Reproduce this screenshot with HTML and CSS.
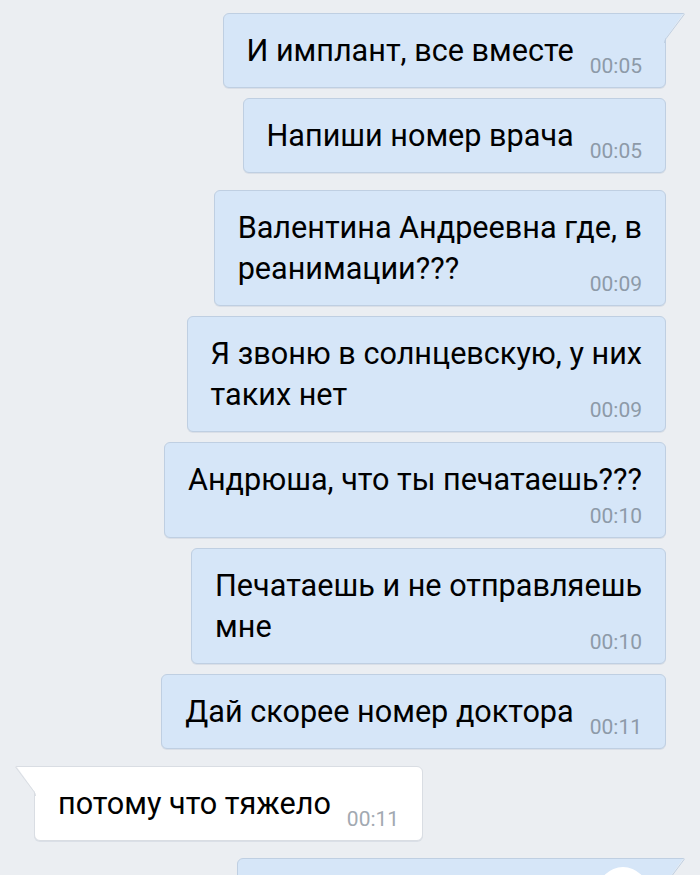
FILE: index.html
```html
<!DOCTYPE html>
<html lang="ru">

<head>
    <meta charset="UTF-8">
    <meta name="viewport" content="width=device-width, initial-scale=1.0">
    <title>Сообщения</title>
    <link rel="stylesheet" href="styles.css">
</head>

<body>
    <div class="chat">
        <div class="msg out row tail">
            <span class="text">И имплант, все вместе</span>
            <span class="time">00:05</span>
            <svg class="tail-svg" width="22" height="30" viewBox="0 0 22 30">
                <path class="tail-fill" d="M0 1 H19 L1.2 26 L0 28 Z"></path>
                <path class="tail-line" d="M0 0.5 H19.6 Q20.6 0.6 20 1.6 L2.2 25.4 Q0.5 27.6 0.5 30"></path>
            </svg>
        </div>
        <div class="msg out row">
            <span class="text">Напиши номер врача</span>
            <span class="time">00:05</span>
        </div>
        <div class="msg out stack group">
            <span class="text">Валентина Андреевна где, в<br>реанимации???</span>
            <span class="time">00:09</span>
        </div>
        <div class="msg out stack">
            <span class="text">Я звоню в солнцевскую, у них<br>таких нет</span>
            <span class="time">00:09</span>
        </div>
        <div class="msg out under">
            <span class="text">Андрюша, что ты печатаешь???</span>
            <span class="time">00:10</span>
        </div>
        <div class="msg out stack">
            <span class="text">Печатаешь и не отправляешь<br>мне</span>
            <span class="time">00:10</span>
        </div>
        <div class="msg out row">
            <span class="text">Дай скорее номер доктора</span>
            <span class="time">00:11</span>
        </div>
        <div class="msg in row tail group">
            <span class="text">потому что тяжело</span>
            <span class="time">00:11</span>
            <svg class="tail-svg" width="22" height="30" viewBox="0 0 22 30">
                <path class="tail-fill" d="M0 1 H19 L1.2 26 L0 28 Z"></path>
                <path class="tail-line" d="M0 0.5 H19.6 Q20.6 0.6 20 1.6 L2.2 25.4 Q0.5 27.6 0.5 30"></path>
            </svg>
        </div>
        <div class="msg out tail group media">
            <div class="sticker"></div>
            <svg class="tail-svg" width="22" height="30" viewBox="0 0 22 30">
                <path class="tail-fill" d="M0 1 H19 L1.2 26 L0 28 Z"></path>
                <path class="tail-line" d="M0 0.5 H19.6 Q20.6 0.6 20 1.6 L2.2 25.4 Q0.5 27.6 0.5 30"></path>
            </svg>
        </div>
    </div>
</body>

</html>
```

FILE: styles.css
```css
body {
    margin: 0;
    height: 875px;
    overflow: hidden;
    background-color: #ebeef2;
    font-family: Roboto, "Noto Sans", sans-serif;
}

.chat {
    display: flex;
    flex-direction: column;
    gap: 10px;
    padding: 13px 34px 0;
}

.msg {
    position: relative;
    padding: 16px 23px;
    border: 1px solid #bfcfe2;
    border-radius: 6px;
    background-color: #d6e6f8;
    box-shadow: 0 1px 0 rgba(120, 140, 165, 0.15);
    font-size: 30.6px;
    line-height: 41px;
    color: #000;
}

.out {
    align-self: flex-end;
}

.in {
    align-self: flex-start;
    background-color: #fff;
    border-color: #d9dde3;
}

.group {
    margin-top: 7px;
}

.time {
    font-size: 21px;
    line-height: 14px;
    color: #8d9aa8;
    white-space: nowrap;
}

.in .time {
    color: #a2a9b1;
}

/* время в той же строке */
.row {
    display: flex;
    align-items: flex-end;
}

.row .time {
    margin-left: 16px;
    margin-bottom: -2px;
}

/* время справа на последней строке */
.stack {
    display: grid;
}

.stack > span {
    grid-area: 1 / 1;
}

.stack .time {
    justify-self: end;
    align-self: end;
    margin-bottom: -2px;
}

/* время отдельной строкой */
.under {
    display: flex;
    flex-direction: column;
}

.under .time {
    align-self: flex-end;
    margin-top: 9px;
    margin-bottom: -2px;
}

/* хвостик у первого сообщения в группе */
.tail.out {
    border-top-right-radius: 0;
}

.tail.in {
    border-top-left-radius: 0;
}

.tail-svg {
    position: absolute;
    top: -1px;
    right: -21px;
    overflow: visible;
}

.in .tail-svg {
    right: auto;
    left: -21px;
    transform: scaleX(-1);
}

.tail-fill {
    fill: #d6e6f8;
}

.tail-line {
    fill: none;
    stroke: #bfcfe2;
    stroke-width: 1;
}

.in .tail-fill {
    fill: #fff;
}

.in .tail-line {
    stroke: #d9dde3;
}

.media {
    width: 393px;
    height: 120px;
    padding: 8px 17px;
    display: flex;
    justify-content: flex-end;
}

.sticker {
    width: 50px;
    height: 50px;
    border-radius: 50%;
    background-color: #fff;
}
```
